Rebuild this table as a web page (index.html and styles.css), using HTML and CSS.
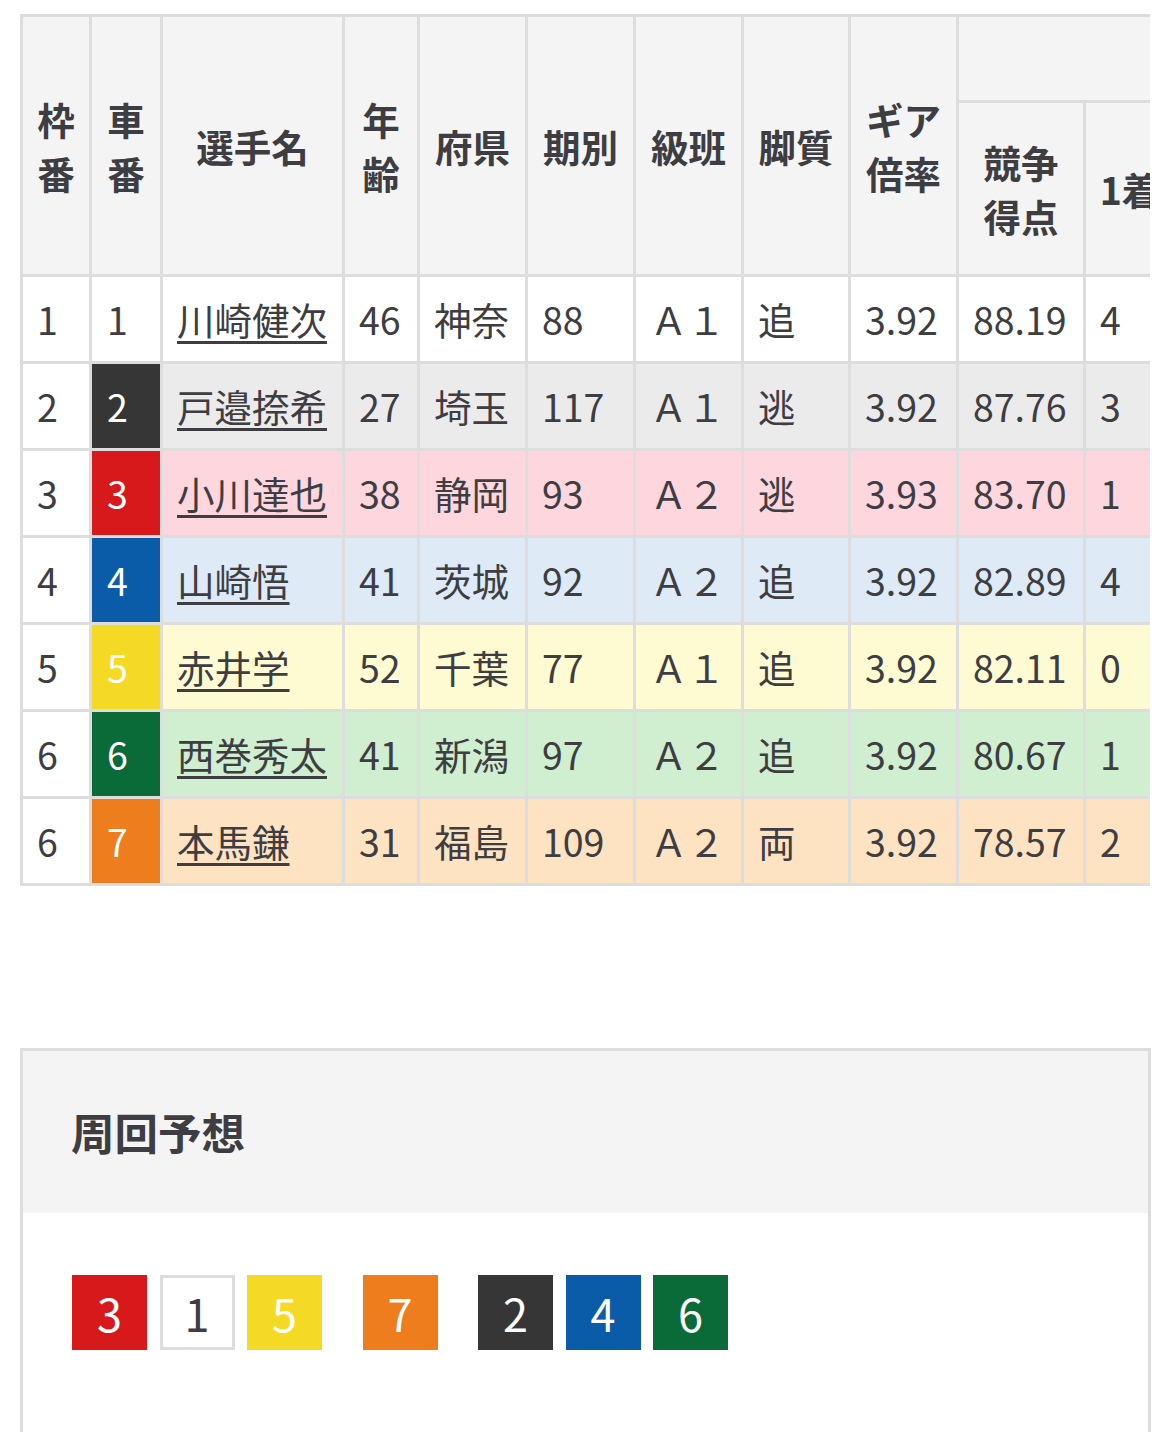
FILE: index.html
```html
<!DOCTYPE html>
<html lang="ja">
<head>
<meta charset="utf-8">
<title>出走表</title>
<link rel="stylesheet" href="styles.css">
</head>
<body>
<div class="table-wrap">
  <table class="entry">
    <colgroup>
      <col class="c-waku"><col class="c-sha"><col class="c-name"><col class="c-age"><col class="c-pref"><col class="c-term"><col class="c-class"><col class="c-leg"><col class="c-gear"><col class="c-score"><col class="c-rank"><col class="c-rank"><col class="c-rank"><col class="c-rank">
    </colgroup>
    <thead>
      <tr class="h1">
        <th rowspan="2">枠<br>番</th>
        <th rowspan="2">車<br>番</th>
        <th rowspan="2">選手名</th>
        <th rowspan="2">年<br>齢</th>
        <th rowspan="2">府県</th>
        <th rowspan="2">期別</th>
        <th rowspan="2">級班</th>
        <th rowspan="2">脚質</th>
        <th rowspan="2">ギア<br>倍率</th>
        <th colspan="5" class="group"></th>
      </tr>
      <tr class="h2">
        <th>競争<br>得点</th>
        <th>1着</th>
        <th>2着</th>
        <th>3着</th>
        <th>着外</th>
      </tr>
    </thead>
    <tbody>
      <tr class="r1">
        <td class="waku">1</td><td class="car car1">1</td><td class="name"><a href="#">川崎健次</a></td><td>46</td><td>神奈</td><td>88</td><td>Ａ１</td><td>追</td><td>3.92</td><td>88.19</td><td>4</td><td>3</td><td>5</td><td>12</td>
      </tr>
      <tr class="r2">
        <td class="waku">2</td><td class="car car2">2</td><td class="name"><a href="#">戸邉捺希</a></td><td>27</td><td>埼玉</td><td>117</td><td>Ａ１</td><td>逃</td><td>3.92</td><td>87.76</td><td>3</td><td>4</td><td>2</td><td>15</td>
      </tr>
      <tr class="r3">
        <td class="waku">3</td><td class="car car3">3</td><td class="name"><a href="#">小川達也</a></td><td>38</td><td>静岡</td><td>93</td><td>Ａ２</td><td>逃</td><td>3.93</td><td>83.70</td><td>1</td><td>2</td><td>4</td><td>17</td>
      </tr>
      <tr class="r4">
        <td class="waku">4</td><td class="car car4">4</td><td class="name"><a href="#">山崎悟</a></td><td>41</td><td>茨城</td><td>92</td><td>Ａ２</td><td>追</td><td>3.92</td><td>82.89</td><td>4</td><td>1</td><td>3</td><td>16</td>
      </tr>
      <tr class="r5">
        <td class="waku">5</td><td class="car car5">5</td><td class="name"><a href="#">赤井学</a></td><td>52</td><td>千葉</td><td>77</td><td>Ａ１</td><td>追</td><td>3.92</td><td>82.11</td><td>0</td><td>2</td><td>3</td><td>19</td>
      </tr>
      <tr class="r6">
        <td class="waku">6</td><td class="car car6">6</td><td class="name"><a href="#">西巻秀太</a></td><td>41</td><td>新潟</td><td>97</td><td>Ａ２</td><td>追</td><td>3.92</td><td>80.67</td><td>1</td><td>3</td><td>2</td><td>18</td>
      </tr>
      <tr class="r7">
        <td class="waku">6</td><td class="car car7">7</td><td class="name"><a href="#">本馬鎌</a></td><td>31</td><td>福島</td><td>109</td><td>Ａ２</td><td>両</td><td>3.92</td><td>78.57</td><td>2</td><td>1</td><td>4</td><td>17</td>
      </tr>
    </tbody>
  </table>
</div>

<section class="lap">
  <div class="lap-head">
    <h2 class="lap-title">周回予想</h2>
  </div>
  <div class="lap-body">
    <div class="line">
      <span class="badge car3">3</span>
      <span class="badge car1">1</span>
      <span class="badge car5">5</span>
    </div>
    <div class="line">
      <span class="badge car7">7</span>
    </div>
    <div class="line">
      <span class="badge car2">2</span>
      <span class="badge car4">4</span>
      <span class="badge car6">6</span>
    </div>
  </div>
</section>
</body>
</html>
```

FILE: styles.css
```css
* {
  box-sizing: border-box;
}

body {
  margin: 0;
  background: #ffffff;
  color: #3d3d42;
  font-family: "Noto Sans CJK JP", "Noto Sans", sans-serif;
}

.table-wrap {
  margin: 14px 0 0 20px;
  width: 1130px;
  overflow: hidden;
}

.entry {
  table-layout: fixed;
  border-collapse: separate;
  border-spacing: 0;
  border-top: 3px solid #dddddd;
  border-left: 3px solid #dddddd;
  width: 1426px;
  font-size: 37.5px;
}

.c-waku { width: 69px; }
.c-sha { width: 71px; }
.c-name { width: 182px; }
.c-age { width: 75px; }
.c-pref { width: 108px; }
.c-term { width: 108px; }
.c-class { width: 108px; }
.c-leg { width: 107px; }
.c-gear { width: 108px; }
.c-score { width: 127px; }
.c-rank { width: 90px; }

.entry th,
.entry td {
  border-right: 3px solid #dddddd;
  border-bottom: 3px solid #dddddd;
}

.entry th {
  background: #f4f4f4;
  font-weight: 700;
  text-align: center;
  vertical-align: middle;
  line-height: 54px;
  padding: 0 4px;
  white-space: nowrap;
}

.h1 th.group {
  height: 86px;
}

.h2 th {
  height: 174px;
}

.entry td {
  height: 87px;
  padding: 0 0 0 14px;
  text-align: left;
  vertical-align: middle;
  line-height: 54px;
  font-weight: 400;
  white-space: nowrap;
}

.entry td.waku {
  background: #ffffff;
}

.entry td.car {
  padding-left: 15px;
  color: #ffffff;
}

.name a {
  color: #3d3d42;
  text-decoration: underline;
  text-decoration-thickness: 3px;
  text-underline-offset: 6px;
}

.r1 td { background: #ffffff; }
.r2 td { background: #ebebeb; }
.r3 td { background: #fed6de; }
.r4 td { background: #deeaf6; }
.r5 td { background: #fefad2; }
.r6 td { background: #d0eed0; }
.r7 td { background: #fee3c3; }

.car1 { background: #ffffff !important; color: #3d3d42 !important; }
.car2 { background: #363636 !important; }
.car3 { background: #d8191b !important; }
.car4 { background: #0b5ca8 !important; }
.car5 { background: #f5da25 !important; }
.car6 { background: #0a6a38 !important; }
.car7 { background: #ee7d1d !important; }

.lap {
  margin: 162px 0 0 20px;
  width: 1131px;
  border: 3px solid #dddddd;
  border-bottom: none;
}

.lap-head {
  background: #f4f4f4;
  height: 162px;
  display: flex;
  align-items: center;
  padding-left: 48px;
}

.lap-title {
  margin: 0;
  font-size: 43.5px;
  font-weight: 700;
  line-height: 1;
}

.lap-body {
  display: flex;
  gap: 40.5px;
  padding: 62px 48px 120px 49px;
}

.line {
  display: flex;
  gap: 12.5px;
}

.badge {
  display: block;
  width: 75px;
  height: 75px;
  line-height: 75px;
  text-align: center;
  font-size: 45px;
  color: #ffffff;
}

.badge.car1 {
  border: 3px solid #dddddd;
  line-height: 69px;
  color: #3d3d42;
}
```
